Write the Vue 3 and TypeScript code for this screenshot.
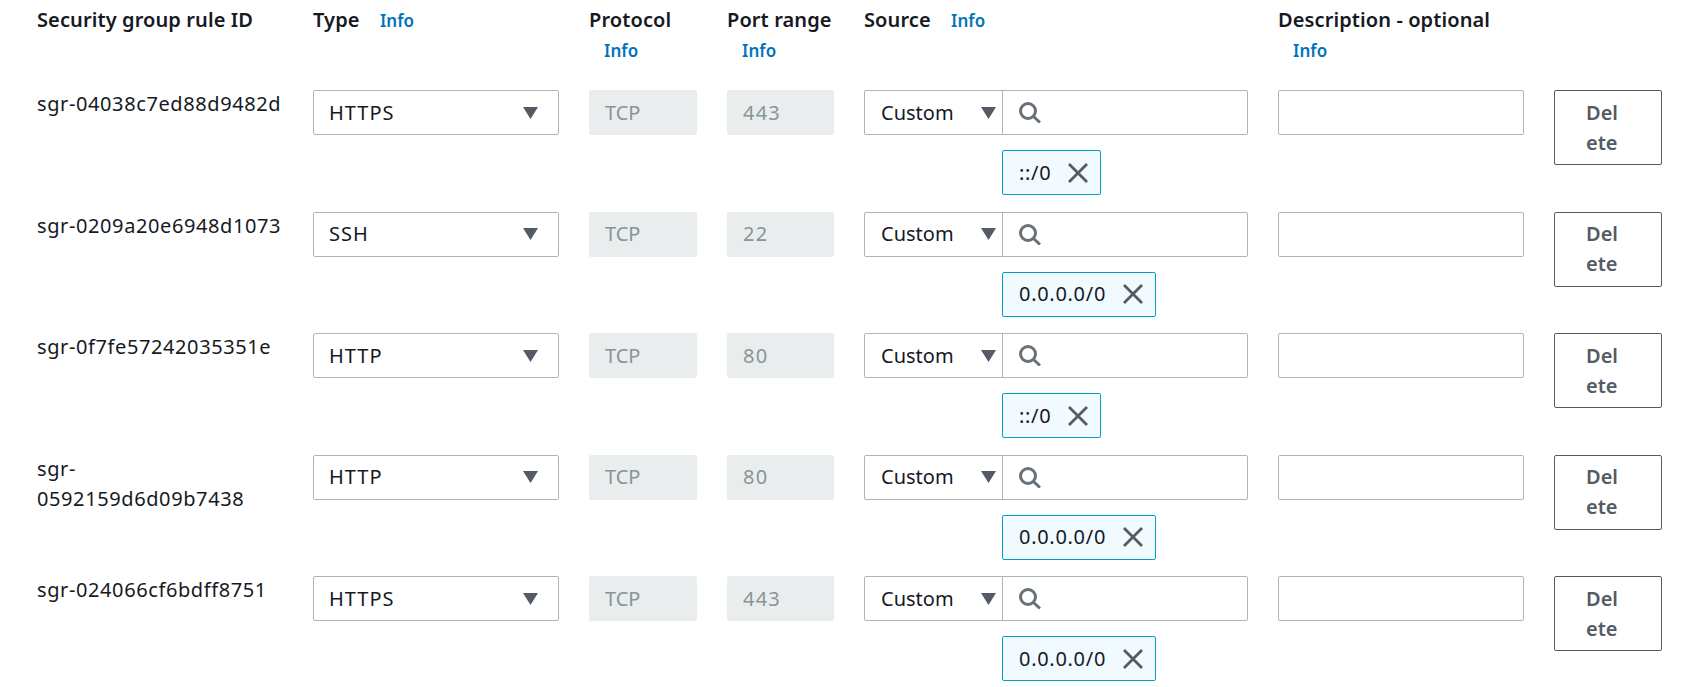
<script setup lang="ts">
interface Rule { id: string; type: string; port: string; cidr: string; narrow?: boolean }
const rules: Rule[] = [
  { id: 'sgr-04038c7ed88d9482d', type: 'HTTPS', port: '443', cidr: '::/0' },
  { id: 'sgr-0209a20e6948d1073', type: 'SSH', port: '22', cidr: '0.0.0.0/0' },
  { id: 'sgr-0f7fe57242035351e', type: 'HTTP', port: '80', cidr: '::/0' },
  { id: 'sgr-0592159d6d09b7438', type: 'HTTP', port: '80', cidr: '0.0.0.0/0', narrow: true },
  { id: 'sgr-024066cf6bdff8751', type: 'HTTPS', port: '443', cidr: '0.0.0.0/0' },
]
</script>

<template>
  <div class="page">
    <div class="grid head">
      <div class="label">Security group rule ID</div>
      <div class="label">Type <a class="info">Info</a></div>
      <div class="label">Protocol <a class="info">Info</a></div>
      <div class="label">Port range <a class="info">Info</a></div>
      <div class="label">Source <a class="info">Info</a></div>
      <div class="label">Description - optional <a class="info">Info</a></div>
      <div></div>
    </div>
    <div v-for="r in rules" :key="r.id" class="grid row">
      <div class="rid" :class="{ narrow: r.narrow }">{{ r.id }}</div>
      <div class="field select">
        <span class="caps">{{ r.type }}</span>
        <svg class="caret" width="15" height="12" viewBox="0 0 15 12"><path d="M0 0h15L7.5 12z" fill="#545b64" /></svg>
      </div>
      <div class="field off">TCP</div>
      <div class="field off num">{{ r.port }}</div>
      <div class="source">
        <div class="combo">
          <div class="combo-select">
            <span>Custom</span>
            <svg class="caret" width="15" height="12" viewBox="0 0 15 12"><path d="M0 0h15L7.5 12z" fill="#545b64" /></svg>
          </div>
          <div class="combo-search">
            <svg width="22" height="21" viewBox="0 0 22 21" fill="none" stroke="#687078" stroke-width="3">
              <circle cx="9" cy="9" r="7.5" />
              <path d="M14.5 14.5L21 20.5" />
            </svg>
          </div>
        </div>
        <div class="token">
          <span class="cidr">{{ r.cidr }}</span>
          <svg width="22" height="20" viewBox="0 0 22 20" fill="none" stroke="#545b64" stroke-width="2.8">
            <path d="M2 1l18 18M20 1L2 19" />
          </svg>
        </div>
      </div>
      <div class="field"></div>
      <button class="del" type="button">Delete</button>
    </div>
  </div>
</template>

<style scoped>
.page {
  width: 1683px;
  height: 687px;
  overflow: hidden;
  padding-left: 37px;
  box-sizing: border-box;
  font-family: "Noto Sans", sans-serif;
  font-size: 20px;
  line-height: 30px;
  color: #16191f;
  background: #fff;
}
.grid {
  display: grid;
  grid-template-columns: 246px 246px 108px 107px 384px 246px 108px;
  column-gap: 30px;
}
.head {
  padding-top: 5px;
  height: 90px;
  box-sizing: border-box;
}
.label {
  font-weight: 600;
  letter-spacing: 0.1px;
}
.info {
  margin-left: 15px;
  font-size: 17px;
  font-weight: 600;
  color: #0073bb;
}
.row {
  height: 121.6px;
  align-items: start;
}
.rid {
  margin-top: -1px;
  letter-spacing: 0.6px;
}
.rid.narrow {
  max-width: 230px;
}
.caps {
  letter-spacing: 1px;
}
.field {
  height: 45px;
  box-sizing: border-box;
  border: 1px solid #aab7b8;
  border-radius: 2px;
  padding: 0 15px;
  display: flex;
  align-items: center;
  justify-content: space-between;
  background: #fff;
}
.off {
  background: #eaeded;
  border-color: #eaeded;
  color: #879596;
}
.num {
  letter-spacing: 1.2px;
}
.caret {
  margin-right: 5px;
  flex: none;
}
.source {
  display: flex;
  flex-direction: column;
  align-items: flex-start;
}
.combo {
  width: 100%;
  height: 45px;
  box-sizing: border-box;
  display: flex;
  border: 1px solid #aab7b8;
  border-radius: 2px;
}
.combo-select {
  width: 138px;
  flex: none;
  box-sizing: border-box;
  padding-left: 16px;
  display: flex;
  align-items: center;
  justify-content: space-between;
  border-right: 1px solid #aab7b8;
}
.combo-select .caret {
  margin-right: 6px;
}
.combo-search {
  flex: 1;
  display: flex;
  align-items: center;
  padding-left: 16px;
}
.token {
  margin: 15px 0 0 138px;
  height: 45px;
  box-sizing: border-box;
  border: 1px solid #00a1c9;
  border-radius: 2px;
  background: #f1faff;
  padding: 0 11px 0 16px;
  display: flex;
  align-items: center;
  gap: 16px;
}
.cidr {
  letter-spacing: 0.7px;
}
.del {
  width: 108px;
  height: 75px;
  padding: 0 32px 0 31px;
  box-sizing: border-box;
  background: #fff;
  border: 1px solid #545b64;
  border-radius: 2px;
  font: 600 20px/30px "Noto Sans", sans-serif;
  color: #545b64;
  text-align: left;
  overflow-wrap: anywhere;
}
</style>
